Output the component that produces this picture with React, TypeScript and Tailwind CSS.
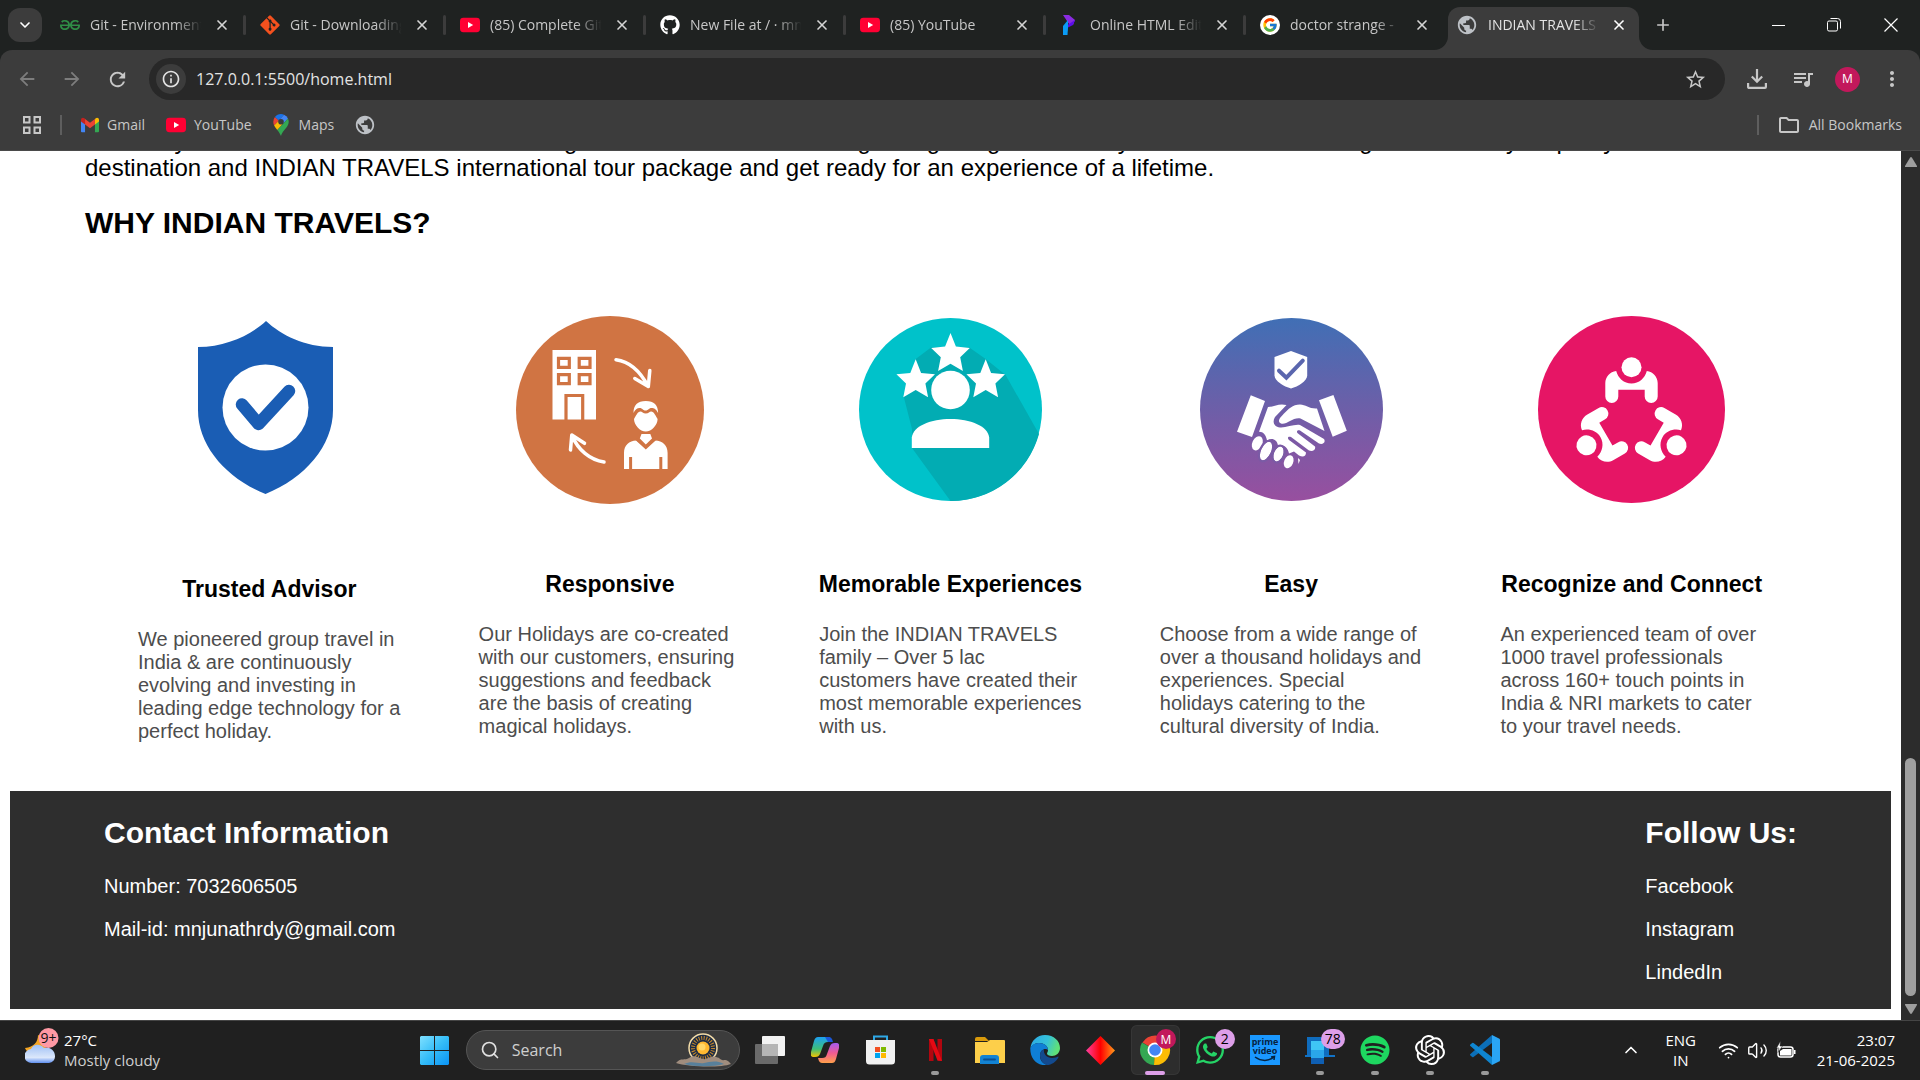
import React from "react";
import { FaGitAlt, FaGithub, FaWhatsapp, FaSpotify } from "react-icons/fa";
import { SiGeeksforgeeks, SiOpenai } from "react-icons/si";
import { FcGoogle } from "react-icons/fc";
import {
  MdArrowBack,
  MdArrowForward,
  MdRefresh,
  MdInfoOutline,
  MdStarOutline,
  MdOutlineQueueMusic,
  MdMoreVert,
  MdPublic,
  MdOutlineFolder,
} from "react-icons/md";
import { ChevronDown, ChevronUp, X, Plus, Wifi, Volume2, Search } from "lucide-react";

/* ---------- small logos ---------- */

function YouTubeLogo() {
  return (
    <svg viewBox="0 0 20 20" className="size-5">
      <rect y="2.8" width="20" height="14.4" rx="3.4" fill="#ff0033" />
      <path d="M8 7v6l5.2-3z" fill="#fff" />
    </svg>
  );
}

function GlobeLogo() {
  return <MdPublic className="size-[22px] text-[#bdc1c6]" />;
}

function ProgrammizLogo() {
  return (
    <svg viewBox="0 0 20 20" className="size-5">
      <path d="M3 0h6l6 5-2 5-4-1z" fill="#8a2be2" />
      <path d="M15 5 13 10 8 12.500 3 13z" fill="#5b0eeb" />
      <path d="M3 11 8 5v8L7.500 20H3z" fill="#0a9cf5" />
    </svg>
  );
}

function GoogleTile() {
  return (
    <span className="flex size-5 items-center justify-center rounded-full bg-white">
      <FcGoogle className="size-4" />
    </span>
  );
}

function GmailLogo() {
  return (
    <svg viewBox="0 0 20 16" className="h-4 w-[18px]">
      <path d="M0 3v12a1 1 0 0 0 1 1h3.500V6z" fill="#4285f4" />
      <path d="M20 3v12a1 1 0 0 1-1 1h-3.500V6z" fill="#34a853" />
      <path d="M15.500 2.200V7.500L20 4V2.200C20 .2 17.800-.7 16.200.6z" fill="#fbbc04" />
      <path d="M0 2.200C0 .2 2.200-.7 3.800.6l.7.6v6.300L0 4z" fill="#c5221f" />
      <path d="M4.500 1.200 10 5.500l5.500-4.300v6.300L10 11.600 4.500 7.500z" fill="#ea4335" />
    </svg>
  );
}

function MapsLogo() {
  return (
    <svg viewBox="0 0 16 22" className="h-[22px] w-4">
      <path d="M1.900 3A7.700 7.700 0 0 0 .3 7.800c0 1.400.3 2.600.8 3.700L6 6.500z" fill="#ea4335" />
      <path d="M8 0C5.500 0 3.300 1.200 1.900 3L6 6.500 11 .7C10 .2 9 0 8 0z" fill="#1a73e8" />
      <path d="M11 .7 5.900 6.500 10 9.800 15 4.500A7.800 7.800 0 0 0 11 .7z" fill="#4285f4" />
      <path d="M1.100 11.500 6 6.500l4 3.300-5.700 6.300c-1.200-1.600-2.400-2.900-3.200-4.600z" fill="#fbbc04" />
      <path d="M15 4.500 4.300 16.100C6 18.300 7 20 8 22c1.500-5 4-6.300 6-9.300 1.700-2.600 2.300-5.200 1-8.200z" fill="#34a853" />
      <circle cx="8" cy="7.700" r="2.800" fill="#3c3c3c" />
    </svg>
  );
}

function DownloadGlyph() {
  return (
    <svg viewBox="0 0 20 20" className="size-5" fill="none" stroke="#c7c7c7" strokeWidth="2.200">
      <path d="M10 0v12M4.800 7.500 10 12.800l5.200-5.300M1.100 14v3.900a1 1 0 0 0 1 1h15.800a1 1 0 0 0 1-1V14" />
    </svg>
  );
}

function AppsGlyph() {
  return (
    <svg viewBox="0 0 18 18" className="size-[18px]" fill="none" stroke="#c7c7c7" strokeWidth="2">
      <path d="M1 1h5.500v5.500H1zM11.500 1H17v5.500h-5.500zM1 11.500h5.500V17H1zM11.500 11.500H17V17h-5.500z" />
    </svg>
  );
}

/* ---------- browser chrome ---------- */

const tabs = [
  { title: "Git - Environment", icon: <SiGeeksforgeeks className="size-5 text-[#2f8d46]" /> },
  { title: "Git - Downloading", icon: <FaGitAlt className="size-[22px] text-[#f4511e]" /> },
  { title: "(85) Complete Git", icon: <YouTubeLogo /> },
  { title: "New File at / · mnj", icon: <FaGithub className="size-5 text-white" /> },
  { title: "(85) YouTube", icon: <YouTubeLogo /> },
  { title: "Online HTML Edit", icon: <ProgrammizLogo /> },
  { title: "doctor strange -", icon: <GoogleTile /> },
];

function TabTitle({ children }: { children: React.ReactNode }) {
  return (
    <span className="w-[114px] overflow-hidden whitespace-nowrap text-left [mask-image:linear-gradient(to_right,#000_75%,transparent_98%)]">
      {children}
    </span>
  );
}

function TabStrip() {
  return (
    <div className="flex h-[50px] items-center bg-[#1f2221] pl-2 text-sm text-[#c7c7c7]">
      <button aria-label="Search tabs" className="flex h-[34px] w-[34px] shrink-0 items-center justify-center rounded-xl bg-[#3c3c3c] text-white">
        <ChevronDown className="size-4" strokeWidth={2.5} />
      </button>
      <nav aria-label="Tabs" className="ml-1 flex h-full min-w-0">
        {tabs.map((tab, i) => (
          <div key={i} className="flex w-[200px] shrink items-center pl-[14px]">
            <span className="flex w-5 shrink-0 justify-center">{tab.icon}</span>
            <button className="ml-[10px] flex">
              <TabTitle>{tab.title}</TabTitle>
            </button>
            <button aria-label="Close tab" className="ml-[10px] text-[#d5d5d5]">
              <X className="size-4" strokeWidth={2.5} />
            </button>
            <span className={i < 6 ? "ml-auto h-5 w-[3px] rounded bg-[#3c3c3c]" : "hidden"} />
          </div>
        ))}
        <div className="flex items-end">
          <svg viewBox="0 0 14 14" className="-ml-3 size-[14px] text-[#3c3c3c]">
            <path d="M14 0v14H0A14 14 0 0 0 14 0z" fill="currentColor" />
          </svg>
          <div className="flex h-[43px] w-[191px] items-center rounded-t-xl bg-[#3c3c3c] pb-2 pl-2 text-[#e3e3e3]">
            <GlobeLogo />
            <button className="ml-[10px] flex">
              <TabTitle>INDIAN TRAVELS</TabTitle>
            </button>
            <button aria-label="Close tab" className="ml-[9px] text-white">
              <X className="size-4" strokeWidth={2.5} />
            </button>
          </div>
          <svg viewBox="0 0 14 14" className="size-[14px] text-[#3c3c3c]">
            <path d="M0 0v14h14A14 14 0 0 1 0 0z" fill="currentColor" />
          </svg>
        </div>
      </nav>
      <button aria-label="New tab" className="ml-px">
        <Plus className="size-[18px]" strokeWidth={2.2} />
      </button>
      <div className="ml-auto flex items-center text-white">
        <button aria-label="Minimize" className="flex w-14 justify-center">
          <span className="h-px w-[13px] bg-white" />
        </button>
        <button aria-label="Restore" className="flex w-14 justify-center">
          <svg viewBox="0 0 14 14" className="size-[14px]" fill="none" stroke="currentColor">
            <rect x=".5" y="3" width="10" height="10" rx="1.500" />
            <path d="M3.500.5h7a3 3 0 0 1 3 3v7" />
          </svg>
        </button>
        <button aria-label="Close" className="flex w-[58px] justify-center">
          <svg viewBox="0 0 14 14" className="size-[14px]" fill="none" stroke="currentColor" strokeWidth="1.200">
            <path d="M.5.5l13 13M13.500.5l-13 13" />
          </svg>
        </button>
      </div>
    </div>
  );
}

function Toolbar() {
  return (
    <div className="bg-[#1f2221]">
      <div className="flex items-center rounded-t-xl bg-[#3c3c3c] pb-2 pl-4 pr-4 pt-2 text-[#c7c7c7]">
        <button aria-label="Back" className="text-[#7d7d7d]">
          <MdArrowBack className="size-[22px]" />
        </button>
        <button aria-label="Forward" className="ml-[23px] text-[#7d7d7d]">
          <MdArrowForward className="size-[22px]" />
        </button>
        <button aria-label="Reload" className="ml-[23px]">
          <MdRefresh className="size-[23px]" />
        </button>
        <div className="ml-5 flex h-[42px] min-w-0 flex-1 items-center rounded-full bg-[#282828] pl-[7px] pr-[18px]">
          <button aria-label="Site information" className="flex size-[30px] items-center justify-center rounded-full bg-[#3c3c3c] text-[#e3e3e3]">
            <MdInfoOutline className="size-5" />
          </button>
          <input
            aria-label="Address"
            defaultValue="127.0.0.1:5500/home.html"
            className="ml-[10px] min-w-0 flex-1 bg-transparent text-base text-[#e3e3e3] outline-none"
          />
          <button aria-label="Bookmark this page">
            <MdStarOutline className="size-[23px]" />
          </button>
        </div>
        <button aria-label="Downloads" className="ml-[22px]">
          <DownloadGlyph />
        </button>
        <button aria-label="Media" className="ml-6">
          <MdOutlineQueueMusic className="size-6" />
        </button>
        <button className="ml-5 flex size-[25px] items-center justify-center rounded-full bg-[#c2185b] text-xs text-white">M</button>
        <button aria-label="Menu" className="ml-5">
          <MdMoreVert className="size-6" />
        </button>
      </div>
    </div>
  );
}

function BookmarksBar() {
  return (
    <nav aria-label="Bookmarks" className="flex h-[43px] items-center border-b border-[#4a4a4a] bg-[#3c3c3c] pb-2 pl-[23px] pr-[18px] text-sm text-[#c7c7c7]">
      <button aria-label="Apps">
        <AppsGlyph />
      </button>
      <span className="ml-[19px] h-5 w-[2px] bg-[#5e5e5e]" />
      <a href="#gmail" className="ml-[19px] flex items-center gap-2">
        <GmailLogo /> Gmail
      </a>
      <a href="#youtube" className="ml-[21px] flex items-center gap-2">
        <YouTubeLogo /> YouTube
      </a>
      <a href="#maps" className="ml-[21px] flex items-center gap-[10px]">
        <MapsLogo /> Maps
      </a>
      <a href="#site" aria-label="Website" className="ml-5">
        <GlobeLogo />
      </a>
      <span className="ml-auto h-5 w-[2px] bg-[#5e5e5e]" />
      <button className="ml-[18px] flex items-center gap-2">
        <MdOutlineFolder className="size-6" /> All Bookmarks
      </button>
    </nav>
  );
}

/* ---------- feature illustrations ---------- */

function TrustedArt() {
  return (
    <svg viewBox="0 0 135 173" className="h-[173px] w-[135px]">
      <path d="M68 0C53 14 28 26 0 26v63c0 36 28 68 67.500 84C107 157 135 125 135 89V26C107 26 83 14 68 0z" fill="#1a5db4" />
      <circle cx="67.500" cy="86.500" r="43" fill="#fff" />
      <path d="M44 83.500l16.500 19.500L91 70" fill="none" stroke="#1a5db4" strokeWidth="12.500" strokeLinecap="round" strokeLinejoin="round" />
    </svg>
  );
}

function ResponsiveArt() {
  return (
    <svg viewBox="0 0 188 188" className="size-[188px]">
      <circle cx="94" cy="94" r="94" fill="#d07443" />
      <path d="M36.500 34H80v69.500H36.500z" fill="#fff" />
      <g fill="none" stroke="#d07443" strokeWidth="3.200">
        <path d="M42.500 42.300h10.800v9H42.500zM63.200 42.300H74v9H63.200zM42.500 58.600h10.800v9H42.500zM63.200 58.600H74v9H63.200z" />
        <path d="M50 104V79.500h16.700V104" />
      </g>
      <g fill="none" stroke="#fff" strokeWidth="3.500" strokeLinecap="round" strokeLinejoin="round">
        <path d="M100 43.700c15 2 25 13 32 26.500M133.800 54.500l-1.500 16-13.500-8" />
        <path d="M88 146c-14-2-26-12-32-26.500M54.500 134l1.300-15 12.700 8.300" />
      </g>
      <path d="M117.500 97c0-8 4-12 12.300-12s12.300 4 12.300 12c-2-4-4-5-6.500-5-3 0-3 2.500-6 2.500s-3-2.500-6-2.500c-2.500 0-4.500 1.500-6.100 5z" fill="#fff" />
      <path d="M118 103c2-3 3.500-7.500 6.500-7.500 1.500 0 2.500 2 5.300 2s3.800-2 5.300-2c3 0 4.500 4.500 6.500 7.500 0 6-6 12.500-11.800 12.500S118 109 118 103z" fill="#fff" />
      <path d="M125.500 118h8.800l1.700 4.500-6.200 6-6-6z" fill="#fff" />
      <path d="M108 153v-16c0-8 5-12 12.500-12.500l9.300 8 9.300-8c7.500.5 12.500 4.500 12.500 12.500v16z" fill="#fff" />
      <path d="M120.500 123l9.300 8.500 9.300-8.500M114.600 141v12M144.800 141v12" fill="none" stroke="#d07443" strokeWidth="3" />
    </svg>
  );
}

function Star({ x, y }: { x: number; y: number }) {
  return (
    <polygon
      points="0,0 5.400,13.600 19.300,15 9.700,24.300 12.400,37.900 0,30.800 -12.400,37.900 -9.700,24.300 -19.300,15 -5.400,13.600"
      transform={`translate(${x} ${y})`}
      fill="#fff"
    />
  );
}

function MemorableArt() {
  return (
    <svg viewBox="0 0 183 183" className="size-[183px]">
      <circle cx="91.500" cy="91.500" r="91.500" fill="#00c2ca" />
      <path d="M56.700 41 72 29.500h38.300L126.700 41 146.600 57 180 116A91.500 91.500 0 0 1 91.500 183L53 130V111L44.800 79z" fill="#02acb3" />
      <Star x={91.5} y={15} />
      <Star x={56.7} y={41.3} />
      <Star x={126.7} y={41.3} />
      <circle cx="91.500" cy="72" r="20.500" fill="#02acb3" />
      <circle cx="91.500" cy="72" r="19.300" fill="#fff" />
      <path d="M52.800 130v-10.500C54 108 72 101 91.500 101s37.500 7 38.700 18.500V130z" fill="#fff" />
    </svg>
  );
}

function EasyArt() {
  return (
    <svg viewBox="0 0 183 183" className="size-[183px]">
      <defs>
        <linearGradient id="easy-fill" x1="0" y1="0" x2="0" y2="1">
          <stop offset="0" stopColor="#406fb5" />
          <stop offset=".45" stopColor="#6960a9" />
          <stop offset="1" stopColor="#984f9f" />
        </linearGradient>
      </defs>
      <circle cx="91.500" cy="91.500" r="91.500" fill="url(#easy-fill)" />
      <path d="M91 33l16.200 6v18.500c0 5.500-9 11-16.200 13-7.200-2-16.500-7.500-16.500-13V39z" fill="#fff" />
      <path d="M79 52.700l7.400 7 16.400-17" fill="none" stroke="#5a66ae" strokeWidth="4" strokeLinecap="round" />
      <g fill="#fff">
        <path d="M50.800 77.300 65 83 52 119l-15-5.300zM133.400 77l13.400 35.700-14.100 6L119 82.300z" strokeLinejoin="round" />
        <path d="M68 89c7 0 10-4 18.500-2L75 99c-3 5-1 9.500 5 10.500 6 .5 14-3.500 20-2.500l24 14c2 3-1 6-5 4.500l-19-13c-3-1-4 1.500-2 3l17 13c1 3-2 5.500-6 4L91 119c-3-1-4 1-2 3l17 12.500c0 4-3 5-7 3l-5-4-5 2c-1-7-7-10-11-8-1-6-6-8-11-5-1-6-4-9-8-8.800z" />
        <path d="M100 86.500c6 0 9 4.500 17 4l7.500 22.500-24-12.500c-8-2-16 9-21 4-2-3 2-6 4-8.500 5-5 9-9.500 16.500-9.500z" />
        <ellipse cx="57.300" cy="125.300" rx="5" ry="7.500" transform="rotate(25 57.300 125.300)" />
        <ellipse cx="66" cy="133" rx="5" ry="10" transform="rotate(25 66 133)" />
        <ellipse cx="78.500" cy="136" rx="4.600" ry="7.800" transform="rotate(22 78.500 136)" />
        <ellipse cx="88.700" cy="143.700" rx="4.500" ry="6.800" transform="rotate(22 88.700 143.700)" />
        <path d="M98 140l2 2-1.500 4z" />
      </g>
      <g fill="none" stroke="#7a5ba5" strokeWidth="2">
        <ellipse cx="66" cy="133" rx="6" ry="11" transform="rotate(25 66 133)" />
        <ellipse cx="78.500" cy="136" rx="5.600" ry="8.800" transform="rotate(22 78.500 136)" />
      </g>
    </svg>
  );
}

function Member({ turn }: { turn: number }) {
  return (
    <g transform={`rotate(${turn} 93.500 103.300)`} fill="#fff">
      <circle cx="93.500" cy="51.300" r="10" />
      <path d="M78.200 55C80 62 86 67.500 93.500 67.500S107 62 108.800 55C115 55.500 119.700 61 119.700 67v13.500a6.500 6.500 0 0 1-13 0v-6.800H80.300v6.800a6.500 6.500 0 0 1-13 0V67c0-6 4.700-11.500 10.900-12z" />
    </g>
  );
}

function ConnectArt() {
  return (
    <svg viewBox="0 0 187 187" className="size-[187px]">
      <circle cx="93.500" cy="93.500" r="93.500" fill="#e61565" />
      <Member turn={0} />
      <Member turn={120} />
      <Member turn={240} />
    </svg>
  );
}

/* ---------- page ---------- */

const features = [
  {
    title: "Trusted Advisor",
    art: <TrustedArt />,
    box: "h-60 pb-[10px] pr-[7px]",
    text: "We pioneered group travel in India & are continuously evolving and investing in leading edge technology for a perfect holiday.",
  },
  {
    title: "Responsive",
    art: <ResponsiveArt />,
    box: "h-[235px]",
    text: "Our Holidays are co-created with our customers, ensuring suggestions and feedback are the basis of creating magical holidays.",
  },
  {
    title: "Memorable Experiences",
    art: <MemorableArt />,
    box: "h-[235px]",
    text: "Join the INDIAN TRAVELS family – Over 5 lac customers have created their most memorable experiences with us.",
  },
  {
    title: "Easy",
    art: <EasyArt />,
    box: "h-[235px]",
    text: "Choose from a wide range of over a thousand holidays and experiences. Special holidays catering to the cultural diversity of India.",
  },
  {
    title: "Recognize and Connect",
    art: <ConnectArt />,
    box: "h-[235px]",
    text: "An experienced team of over 1000 travel professionals across 160+ touch points in India & NRI markets to cater to your travel needs.",
  },
];

function TravelPage() {
  return (
    <div className='min-w-0 flex-1 overflow-hidden bg-white px-[10px] font-["Liberation_Sans",Arial,sans-serif] text-black'>
      <div className="px-[75px]">
        <p className="-mt-6 text-2xl leading-[27px]">
          Choose your favourite destination before the great festivals and the eating hiking bring the culinary adventures all the eager and steady stop any
          <br />
          destination and INDIAN TRAVELS international tour package and get ready for an experience of a lifetime.
        </p>
        <h2 className="mt-[25px] text-[30px] font-bold leading-[34px]">WHY INDIAN TRAVELS?</h2>
      </div>
      <section className="mt-[52px] grid grid-cols-5 px-[89px] pb-12">
        {features.map((f) => (
          <article key={f.title} className="px-[39px]">
            <div className={`flex items-center justify-center ${f.box}`}>{f.art}</div>
            <h3 className="-mx-4 mt-11 text-center text-[23px] font-bold leading-[27px]">{f.title}</h3>
            <p className="mt-[25px] text-xl leading-[23px] text-[#4d4d4d]">{f.text}</p>
          </article>
        ))}
      </section>
      <footer className="flex justify-between bg-[#2e2e2e] px-[94px] py-[25px] text-xl leading-[23px] text-white">
        <div className="flex flex-col gap-5">
          <h2 className="mb-[5px] text-[30px] font-bold leading-[34px]">Contact Information</h2>
          <p>Number: 7032606505</p>
          <p>Mail-id: mnjunathrdy@gmail.com</p>
        </div>
        <div className="flex flex-col gap-5">
          <h2 className="mb-[5px] text-[30px] font-bold leading-[34px]">Follow Us:</h2>
          <a href="#facebook">Facebook</a>
          <a href="#instagram">Instagram</a>
          <a href="#linkedin">LindedIn</a>
        </div>
      </footer>
    </div>
  );
}

function ScrollTrack() {
  return (
    <div className="flex w-[19px] shrink-0 flex-col items-center bg-[#2c2c2c] py-[6px]">
      <svg viewBox="0 0 12 10" className="h-[10px] w-3">
        <path d="M5 .8a1.200 1.200 0 0 1 2 0L12 9a.7.7 0 0 1-.6 1H.6A.7.7 0 0 1 0 9z" fill="#9f9f9f" />
      </svg>
      <span className="flex-1" />
      <span className="mb-2 h-[238px] w-[11px] rounded-full bg-[#9f9f9f]" />
      <svg viewBox="0 0 12 10" className="h-[10px] w-3">
        <path d="M5 9.200a1.200 1.200 0 0 0 2 0L12 1a.7.7 0 0 0-.6-1H.6A.7.7 0 0 0 0 1z" fill="#9f9f9f" />
      </svg>
    </div>
  );
}

/* ---------- taskbar ---------- */

function WeatherArt() {
  return (
    <svg viewBox="0 0 34 36" className="h-9 w-[34px]">
      <defs>
        <linearGradient id="cloud" x1="0" y1="0" x2="0" y2="1">
          <stop offset="0" stopColor="#9fc0f5" />
          <stop offset=".7" stopColor="#dbe7fb" />
          <stop offset="1" stopColor="#5f8ff0" />
        </linearGradient>
      </defs>
      <path d="M13 7c0 7-4 12-13 13 2 6 12 8 18 3s5-13-5-16z" fill="#f5a623" />
      <path d="M7 35a7 7 0 0 1-1-14c2-5 9-6 13-1 5-2 11 2 11 8a6.500 6.500 0 0 1-6 7z" fill="url(#cloud)" />
      <circle cx="23.500" cy="10" r="10" fill="#ff99a4" />
      <text x="23.500" y="14.500" fontSize="14" textAnchor="middle" fill="#111">
        9+
      </text>
    </svg>
  );
}

function StartArt() {
  return (
    <svg viewBox="0 0 29 29" className="size-[29px]">
      <defs>
        <linearGradient id="win" x1="0" y1="0" x2="1" y2="1">
          <stop offset="0" stopColor="#7fe0ff" />
          <stop offset=".5" stopColor="#35bdf8" />
          <stop offset="1" stopColor="#0a93f5" />
        </linearGradient>
      </defs>
      <path d="M1 0h13v14H0V1zM15 0h13l1 1v13H15zM0 15h14v14H1l-1-1zM15 15h14v13l-1 1H15z" fill="url(#win)" />
    </svg>
  );
}

function SunriseArt() {
  return (
    <svg viewBox="0 0 56 34" className="h-[34px] w-14">
      <circle cx="27" cy="15" r="14" fill="#1d2c44" stroke="#f3dca8" strokeWidth="1.500" />
      <circle cx="27" cy="15" r="10" fill="none" stroke="#c98a2b" strokeWidth="4" strokeDasharray="1 1.500" />
      <circle cx="27" cy="15" r="6.500" fill="#ffb931" />
      <circle cx="26" cy="14" r="3.500" fill="#ffd768" />
      <path d="M0 30c5-6 9-2 13-5 5-4 9 0 14 1 4 1 8-4 13-2 5 1 5 4 8 3 4 0 5 2 7 4-10 4-44 3-55-1z" fill="#a08d7e" />
      <path d="M8 31c8-4 14 0 20-1s12-3 20 1c-10 3-30 3-40 0z" fill="#58809b" />
    </svg>
  );
}

function TaskViewArt() {
  return (
    <svg viewBox="0 0 30 30" className="size-[30px]">
      <rect x="7" y="1" width="23" height="20" rx="1" fill="#f2f2f2" />
      <rect x="0" y="9" width="23" height="20" rx="1" fill="#6a6a6a" />
      <path d="M7 9h16v12H7z" fill="#b5b5b5" />
    </svg>
  );
}

function CopilotArt() {
  return (
    <svg viewBox="0 0 28 26" className="h-[26px] w-7">
      <defs>
        <linearGradient id="cp1" x1="0" y1="0" x2="0" y2="1">
          <stop offset="0" stopColor="#1da0f2" />
          <stop offset=".6" stopColor="#3ebf78" />
          <stop offset="1" stopColor="#f5c400" />
        </linearGradient>
        <linearGradient id="cp2" x1="0" y1="0" x2="0" y2="1">
          <stop offset="0" stopColor="#a45cf0" />
          <stop offset=".5" stopColor="#f05a93" />
          <stop offset="1" stopColor="#ffa04a" />
        </linearGradient>
      </defs>
      <path d="M7 0h9c3 0 4 1 5 5h-4c-3 0-4 1-5 4l-3 8c-1 2-2 3-5 3H3c-3 0-4-2-3-5L3 4c1-3 2-4 4-4z" fill="url(#cp1)" />
      <path d="M14 0h3c3 0 4 1 5 5h-5z" fill="#1b57d8" />
      <path d="M21 26h-9c-3 0-4-1-5-5h4c3 0 4-1 5-4l3-8c1-2 2-3 5-3h1c3 0 4 2 3 5l-3 11c-1 3-2 4-4 4z" fill="url(#cp2)" />
    </svg>
  );
}

function StoreArt() {
  return (
    <svg viewBox="0 0 29 30" className="h-[30px] w-[29px]">
      <path d="M8 7V1.500h13V7" fill="none" stroke="#2ea8e6" strokeWidth="2" />
      <path d="M0 5h29v21a3.500 3.500 0 0 1-3.500 3.500h-22A3.500 3.500 0 0 1 0 26z" fill="#f1f1f1" />
      <path d="M9 12h5v5H9z" fill="#f25022" />
      <path d="M15 12h5v5h-5z" fill="#7fba00" />
      <path d="M9 18h5v5H9z" fill="#00a4ef" />
      <path d="M15 18h5v5h-5z" fill="#ffb900" />
    </svg>
  );
}

function NetflixArt() {
  return (
    <svg viewBox="0 0 13 22" className="h-[22px] w-[13px]">
      <path d="M0 0h4.500v22L0 22zM8.500 0H13v22l-4.500-.5z" fill="#b1060f" />
      <path d="M0 0h4.500L13 22l-4.500-.5z" fill="#e50914" />
    </svg>
  );
}

function FilesArt() {
  return (
    <svg viewBox="0 0 30 27" className="h-[27px] w-[30px]">
      <path d="M0 2a2 2 0 0 1 2-2h8l4 4H0z" fill="#d99a0b" />
      <path d="M0 5h12l3-2h14a1 1 0 0 1 1 1v22H0z" fill="#fdcf4a" />
      <path d="M5 27v-6a3 3 0 0 1 3-3h13a3 3 0 0 1 3 3v6z" fill="#1383d3" />
      <path d="M9 22.500h11" stroke="#0b4f91" strokeWidth="1.800" strokeLinecap="round" />
    </svg>
  );
}

function EdgeArt() {
  return (
    <svg viewBox="0 0 30 30" className="size-[30px]">
      <defs>
        <linearGradient id="edge-top" x1="0" y1="0" x2="1" y2=".3">
          <stop offset="0" stopColor="#2aa8e8" />
          <stop offset=".6" stopColor="#35c1d8" />
          <stop offset="1" stopColor="#5fe07a" />
        </linearGradient>
      </defs>
      <path d="M15 0c9 0 15 6 15 13 0 5-4 8-8 8-3 0-5-1-5-2.500 0-1 1-1.500 1-3.500 0-4-4-7-9-7-4 0-7 2-8.500 5C1 6 7 0 15 0z" fill="url(#edge-top)" />
      <path d="M.3 13C2 9.500 5 8 9 8c5 0 9 3 9 7-2-2-8-1-8 6 0 5 4 8.500 8 9-1 .3-2 .3-3 .3C6 30 0 23 .3 13z" fill="#0f7fd6" />
      <path d="M10 20c0-3 2-5 4-6-1 5 3 9 8 9 3 0 5-1 6-1.500.5 0 .7.300.5.700C26 27 21.500 30 17 30c-4-1-7-5-7-10z" fill="#134a8e" />
    </svg>
  );
}

function DiamondArt() {
  return (
    <svg viewBox="0 0 29 29" className="size-[29px]">
      <defs>
        <linearGradient id="diamond">
          <stop offset="0" stopColor="#ff3fa0" />
          <stop offset=".5" stopColor="#ff0000" />
          <stop offset="1" stopColor="#ff9a1a" />
        </linearGradient>
      </defs>
      <path d="M14.500 0 29 14.500 14.500 29 0 14.500z" fill="url(#diamond)" />
    </svg>
  );
}

function ChromeArt() {
  return (
    <svg viewBox="-3 3 36 36" className="size-9 overflow-visible">
      <path d="M15 21 2.500 13.500A15 15 0 0 1 28 13.500z" fill="#ea4335" />
      <path d="M15 21 2 13.500A15 15 0 0 0 14 36z" fill="#34a853" />
      <path d="M15 21 28 13.500A15 15 0 0 1 14 36z" fill="#fbbc04" />
      <circle cx="15" cy="21" r="7.500" fill="#fff" />
      <circle cx="15" cy="21" r="5.800" fill="#4285f4" />
      <circle cx="26" cy="10" r="10" fill="#c2185b" />
      <text x="26" y="14.500" fontSize="12" textAnchor="middle" fill="#fff">
        M
      </text>
    </svg>
  );
}

function PrimeArt() {
  return (
    <svg viewBox="0 0 30 30" className="size-[30px]">
      <path d="M0 0h30v30H0z" fill="#1a98ff" />
      <g fill="#06233f" fontWeight="700" fontSize="9" textAnchor="middle">
        <text x="15" y="10">
          prime
        </text>
        <text x="15" y="19">
          video
        </text>
      </g>
      <path d="M5 22c6 4.500 14 4.500 19 0M21 22l3.500-.5-.5 3.500" fill="none" stroke="#06233f" strokeWidth="1.500" />
    </svg>
  );
}

function PhoneLinkArt() {
  return (
    <svg viewBox="0 0 30 28" className="h-7 w-[30px]">
      <path d="M2 1h22v20H2z" fill="#0f6cbd" />
      <path d="M0 19h30v2H0z" fill="#1173c8" />
      <path d="M6 5h13v23H6z" fill="#2aa6ea" />
      <path d="M6 5h13v9H6z" fill="#3fc6f5" />
      <path d="M6 22h13v6H6z" fill="#0f5fb3" />
    </svg>
  );
}

function CodeArt() {
  return (
    <svg viewBox="0 0 30 30" className="size-[30px]">
      <path d="M22 0v8L3.500 22a1 1 0 0 1-1.300 0L.4 20.400a1 1 0 0 1 0-1.500z" fill="#0c6fb8" />
      <path d="M22 30v-8L3.500 8a1 1 0 0 0-1.300 0L.4 9.600a1 1 0 0 0 0 1.500z" fill="#0f86d1" />
      <path d="M22 0l7 3.400a1.500 1.500 0 0 1 1 1.400v20.400a1.500 1.500 0 0 1-1 1.400L22 30z" fill="#2aa5f5" />
    </svg>
  );
}

type App = { name: string; art: React.ReactNode; mark?: "open" | "active"; badge?: string };

const apps: App[] = [
  { name: "Task view", art: <TaskViewArt /> },
  { name: "Copilot", art: <CopilotArt /> },
  { name: "Store", art: <StoreArt /> },
  { name: "Netflix", art: <NetflixArt />, mark: "open" },
  { name: "Files", art: <FilesArt /> },
  { name: "Edge", art: <EdgeArt /> },
  { name: "Diamond", art: <DiamondArt /> },
  { name: "Chrome", art: <ChromeArt />, mark: "active" },
  { name: "WhatsApp", art: <FaWhatsapp className="size-8 text-[#25d366]" />, badge: "2" },
  { name: "Prime Video", art: <PrimeArt /> },
  { name: "Phone Link", art: <PhoneLinkArt />, mark: "open", badge: "78" },
  { name: "Spotify", art: <FaSpotify className="size-[30px] text-[#1ed760]" />, mark: "open" },
  { name: "ChatGPT", art: <SiOpenai className="size-[30px] text-white" />, mark: "open" },
  { name: "VS Code", art: <CodeArt />, mark: "open" },
];

function TaskButton({ app }: { app: App }) {
  const active = app.mark === "active";
  return (
    <button
      aria-label={app.name}
      className={
        active
          ? "relative mx-[3px] flex h-[50px] w-[49px] items-center justify-center rounded-md bg-[#2d2d2d] ring-1 ring-[#363636] ring-inset"
          : "relative mx-[3px] flex h-[50px] w-[49px] items-center justify-center"
      }
    >
      {app.art}
      {app.badge && (
        <span className="absolute right-0 top-1 flex h-5 min-w-5 items-center justify-center rounded-full bg-[#dd9fe8] px-1 text-sm leading-5 text-black">
          {app.badge}
        </span>
      )}
      {app.mark && (
        <span
          className={
            active
              ? "absolute bottom-0 h-1 w-5 rounded-full bg-[#dd9fe8]"
              : "absolute bottom-0 h-1 w-2 rounded-full bg-[#9a9a9a]"
          }
        />
      )}
    </button>
  );
}

function BatteryArt() {
  return (
    <svg viewBox="0 0 20 18" className="h-[18px] w-5">
      <rect x="2" y="6" width="15" height="10" rx="2.500" fill="none" stroke="#fff" strokeWidth="1.500" />
      <path d="M4 14V10l3-2h8.500v6.500H4zM18 9h1.500v4H18z" fill="#fff" />
      <path d="M4.500 0 .5 7H3L2 11.500 6.500 5H4z" fill="#fff" stroke="#202020" strokeWidth=".5" />
    </svg>
  );
}

function Taskbar() {
  return (
    <div className="flex h-[60px] shrink-0 items-center border-t border-[#454545] bg-[#202020] pb-px text-[15px] text-white">
      <button className="ml-[25px] flex items-center text-left leading-5">
        <span className="-mt-2">
          <WeatherArt />
        </span>
        <span className="ml-[5px]">
          <span className="block">27°C</span>
          <span className="block text-[#cfcfcf]">Mostly cloudy</span>
        </span>
      </button>
      <div className="ml-auto flex items-center">
        <button aria-label="Start">
          <StartArt />
        </button>
        <label className="ml-[17px] mr-[3px] flex h-10 w-[274px] items-center rounded-full border border-[#555] bg-[#3c3c3c] pl-[13px] pr-[7px]">
          <Search className="size-5 text-[#e0e0e0]" />
          <input aria-label="Search" placeholder="Search" className="ml-3 min-w-0 flex-1 bg-transparent text-base outline-none placeholder:text-[#cfcfcf]" />
          <SunriseArt />
        </label>
        {apps.map((app) => (
          <TaskButton key={app.name} app={app} />
        ))}
      </div>
      <div className="ml-[108px] flex items-center pr-[25px]">
        <button aria-label="Hidden icons">
          <ChevronUp className="size-5" />
        </button>
        <button className="ml-[23px] w-[34px] text-center leading-5">
          ENG
          <br />
          IN
        </button>
        <span className="ml-5 flex items-center gap-2">
          <Wifi className="size-[21px]" />
          <Volume2 className="size-[21px]" strokeWidth={1.6} />
          <BatteryArt />
        </span>
        <time className="ml-[21px] text-right leading-5">
          23:07
          <br />
          21-06-2025
        </time>
      </div>
    </div>
  );
}

export default function App() {
  return (
    <div className='flex h-screen flex-col overflow-hidden font-["Open_Sans","Noto_Sans",sans-serif]'>
      <TabStrip />
      <Toolbar />
      <BookmarksBar />
      <main className="flex min-h-0 flex-1">
        <TravelPage />
        <ScrollTrack />
      </main>
      <Taskbar />
    </div>
  );
}
